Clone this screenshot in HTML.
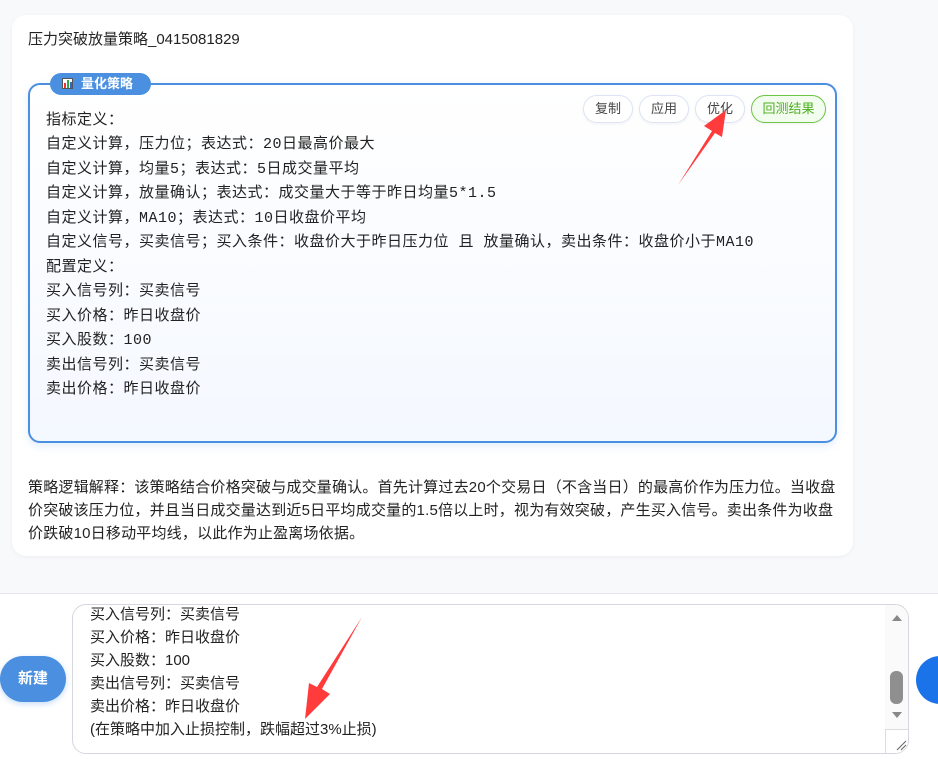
<!DOCTYPE html>
<html><head><meta charset="utf-8"><style>
*{box-sizing:border-box;margin:0;padding:0}
body{width:938px;height:759px;background:#f8f9fb;font-family:"Liberation Sans","Noto Sans CJK SC",sans-serif;color:#222;position:relative;overflow:hidden}
.card{position:absolute;left:12px;top:15px;width:841px;height:541px;background:#fff;border-radius:14px;box-shadow:0 1px 4px rgba(0,0,0,.05)}
.title{position:absolute;left:28px;top:28px;font-size:15px;color:#222}
.box{position:absolute;left:28px;top:83px;width:809px;height:360px;border:2px solid #4a8fe0;border-radius:12px;background:linear-gradient(#fff,#f4f8ff);box-shadow:0 3px 8px rgba(74,143,224,.15)}
.pill{position:absolute;left:50px;top:73px;width:101px;height:22px;border-radius:11px;background:#4a8fe0;color:#fff;font-size:13px;font-weight:bold;line-height:22px;padding-left:12px}
.pre{position:absolute;left:46px;top:109px;font-family:"Liberation Mono","Noto Sans CJK SC",monospace;font-size:15px;letter-spacing:0.5px;line-height:24.45px;color:#222;white-space:pre}
.btn{position:absolute;top:95px;height:28px;border-radius:14px;border:1px solid #dde4f5;background:#fff;font-size:13px;color:#444;text-align:center;line-height:26px;box-shadow:0 1px 3px rgba(0,0,0,.06)}
.expl{position:absolute;left:28px;top:476px;width:830px;font-size:15px;letter-spacing:0.2px;line-height:23px;color:#222;white-space:nowrap}
.bottom{position:absolute;left:0;top:593px;width:938px;height:166px;background:#fff;border-top:1px solid #e4e6ea}
.ta{position:absolute;left:72px;top:604px;width:837px;height:150px;border:1px solid #d4d8de;border-radius:14px;overflow:hidden;background:#fff}
.tat{position:absolute;left:17px;top:-2px;font-size:15px;line-height:23px;color:#222;white-space:pre}
.new{position:absolute;left:0;top:656px;width:66px;height:46px;border-radius:23px;background:#4a8fe0;color:#fff;font-size:15px;font-weight:bold;text-align:center;line-height:46px;box-shadow:0 2px 6px rgba(74,143,224,.3)}
</style></head><body>
<div class="card"></div>
<div class="title">压力突破放量策略_0415081829</div>
<div class="box"></div>
<div class="pill"><span style="display:inline-block;width:11px;height:11px;border:1px solid #555;background:#fff;vertical-align:-1px;margin-right:8px;position:relative"><span style="position:absolute;left:1px;bottom:0;width:2px;height:5px;background:#e33"></span><span style="position:absolute;left:4px;bottom:0;width:2px;height:8px;background:#3a3"></span><span style="position:absolute;left:7px;bottom:0;width:2px;height:6px;background:#36c"></span></span>量化策略</div>
<div class="btn" style="left:583px;width:50px">复制</div>
<div class="btn" style="left:639px;width:50px">应用</div>
<div class="btn" style="left:695px;width:50px">优化</div>
<div class="btn" style="left:751px;width:75px;border-color:#6cc644;background:#f3fdef;color:#4caf1f">回测结果</div>
<div class="pre">指标定义：
自定义计算，压力位；表达式：20日最高价最大
自定义计算，均量5；表达式：5日成交量平均
自定义计算，放量确认；表达式：成交量大于等于昨日均量5*1.5
自定义计算，MA10；表达式：10日收盘价平均
自定义信号，买卖信号；买入条件：收盘价大于昨日压力位 且 放量确认，卖出条件：收盘价小于MA10
配置定义：
买入信号列：买卖信号
买入价格：昨日收盘价
买入股数：100
卖出信号列：买卖信号
卖出价格：昨日收盘价</div>
<div class="expl">策略逻辑解释：该策略结合价格突破与成交量确认。首先计算过去20个交易日（不含当日）的最高价作为压力位。当收盘<br>价突破该压力位，并且当日成交量达到近5日平均成交量的1.5倍以上时，视为有效突破，产生买入信号。卖出条件为收盘<br>价跌破10日移动平均线，以此作为止盈离场依据。</div>
<div class="bottom"></div>
<div class="ta"><div class="tat">买入信号列：买卖信号
买入价格：昨日收盘价
买入股数：100
卖出信号列：买卖信号
卖出价格：昨日收盘价
(在策略中加入止损控制，跌幅超过3%止损)</div>
<div style="position:absolute;right:0;top:0;width:23px;height:150px;background:#fafafa"></div>
<div style="position:absolute;right:6px;top:10px;width:0;height:0;border-left:5px solid transparent;border-right:5px solid transparent;border-bottom:6px solid #888"></div>
<div style="position:absolute;right:5px;top:66px;width:13px;height:33px;border-radius:6px;background:#8f8f8f"></div>
<div style="position:absolute;right:6px;top:107px;width:0;height:0;border-left:5px solid transparent;border-right:5px solid transparent;border-top:6px solid #888"></div>
<div style="position:absolute;right:0;top:124px;width:23px;height:26px;border-top:1px solid #ddd;border-left:1px solid #ddd;background:#fff"></div>
</div>
<div class="new">新建</div>
<div style="position:absolute;left:916px;top:656px;width:48px;height:48px;border-radius:50%;background:#1a73e8"></div>
<svg style="position:absolute;left:0;top:0" width="938" height="759">
<polygon points="678,185 712,131 704,126 726,110 722,137 715,133" fill="#ff3b3b"/>
<polygon points="362,617 322,689 330,694 305,719 309,683 317,687" fill="#ff3b3b"/>
<path d="M897,750 L906,741 M901,750 L906,745" stroke="#666" stroke-width="1"/>
</svg>
</body></html>
